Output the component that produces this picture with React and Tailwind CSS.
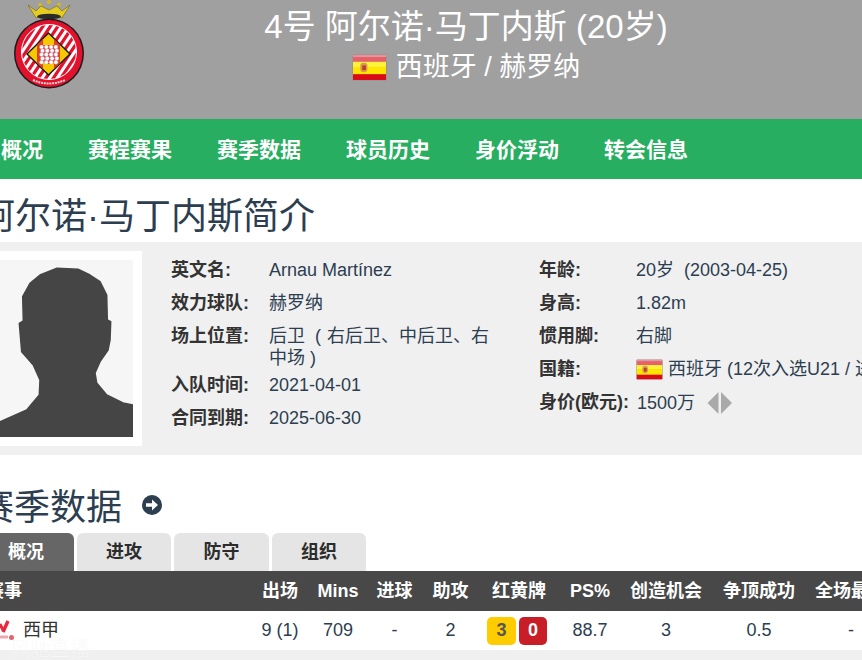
import React from "react";

const font = { fontFamily: '"Liberation Sans", "Noto Sans CJK SC", sans-serif' };

function Flag({ className }) {
  return (
    <svg viewBox="0 0 34 26" className={className + " blur-[0.3px]"} preserveAspectRatio="none">
      <rect x="0.5" y="0.5" width="33" height="25" rx="1.5" fill="#8f8f8f" />
      <rect x="1" y="1" width="32" height="2" fill="#f09098" />
      <rect x="1" y="3" width="32" height="4.5" fill="#e8606c" />
      <rect x="1" y="7.5" width="32" height="5" fill="#fff23a" />
      <rect x="1" y="12.5" width="32" height="7" fill="#ffe600" />
      <rect x="1" y="19.5" width="32" height="5.5" fill="#dd0a14" />
      <rect x="8" y="8.5" width="7" height="9" rx="3" fill="#d89a50" />
      <rect x="10" y="11" width="3.5" height="4.5" fill="#b8402a" />
    </svg>
  );
}

function Crest() {
  const stripes = [];
  for (let i = -8; i < 14; i++) {
    stripes.push(<line key={i} x1={i * 7.5 - 10} y1="100" x2={i * 7.5 + 50} y2="10" stroke="#fff" strokeWidth="3" />);
  }
  const dots = [];
  for (let r = 0; r < 5; r++) {
    for (let c = 0; c < 4; c++) {
      dots.push(<circle key={r + "-" + c} cx={41.5 + c * 4.8 + (r % 2 ? 1 : 0)} cy={47 + r * 3.8} r="2" fill="#fff" stroke="#d4a0a0" strokeWidth="0.4" />);
    }
  }
  return (
    <svg viewBox="0 0 100 100" className="w-[100px] h-[100px] shrink-0 blur-[0.35px]">
      <path d="M28 5 L36 11 L41 6 L49 10 L57 6 L62 11 L70 5 L62 18 Q49 12 36 18 Z" fill="#e6cc20" stroke="#6a6020" strokeWidth="0.6" />
      <circle cx="40" cy="4.5" r="1.8" fill="#d8b818" />
      <circle cx="49" cy="2" r="2" fill="#d8b818" />
      <circle cx="59" cy="4.5" r="1.8" fill="#d8b818" />
      <ellipse cx="49" cy="16.5" rx="12" ry="2.8" fill="#2a2a2a" />
      <circle cx="49" cy="53.5" r="35" fill="#1c1c1c" />
      <circle cx="49" cy="53.5" r="33.5" fill="#e2122d" />
      <clipPath id="inner"><circle cx="49" cy="52" r="27.5" /></clipPath>
      <circle cx="49" cy="52" r="27.5" fill="#e2122d" stroke="#fff" strokeWidth="1" />
      <g clipPath="url(#inner)">{stripes}</g>
      <path d="M48.5 32 L71 54 L48.5 76 L26 54 Z" fill="#1a1a1a" />
      <path d="M48.5 34 L69 54 L48.5 74 L28 54 Z" fill="#f5c800" />
      <path d="M37 45 L43 39 L43 69 L37 63 Z" fill="#e04020" />
      <path d="M54 39 L60 45 L60 63 L54 69 Z" fill="#e04020" />
      <path d="M39.5 45 H58.5 V60 Q49 68 39.5 60 Z" fill="#d8405a" />
      {dots}
      <path d="M33 80 Q49 87 65 80" stroke="#f5d5d5" strokeWidth="2" fill="none" strokeDasharray="2 0.8" />
    </svg>
  );
}

function Silhouette() {
  return (
    <svg viewBox="0 0 133 177" className="w-[133px] h-[177px] block bg-[#f6f6f6]">
      <path
        d="M57 8.3 L78 9.3 L90 15 L100 21.7 L106.7 35 L107.3 60 L110.7 61.7 L110 80 L108 90 L100 101.7 L95 113 L96.7 123 L106.7 135 L123 143 L133 145 L133 177 L0 177 L0 161.7 L26.7 150 L39.3 135 L40 120 L33.3 105 L21.7 91.7 L19.3 63.3 L23.3 61 L22.7 36.7 L30 23.3 L40 15 Z"
        fill="#454545"
        stroke="#454545"
        strokeWidth="1.5"
        strokeLinejoin="round"
      />
    </svg>
  );
}

function Row({ label, labelW, children, wrap }) {
  return (
    <div className="flex min-h-[33px] pt-[5px] leading-[22px]">
      <div className="font-bold text-[#333] shrink-0" style={{ width: labelW }}>{label}</div>
      <div className={wrap ? "w-[225px] text-[#2c3e50]" : "whitespace-nowrap text-[#2c3e50]"}>{children}</div>
    </div>
  );
}

function Cell({ children, className = "" }) {
  return <div className={"flex items-center justify-center whitespace-nowrap " + className}>{children}</div>;
}

const headers = ["出场", "Mins", "进球", "助攻", "红黄牌", "PS%", "创造机会", "争顶成功", "全场最佳"];

export default function App() {
  return (
    <div className="w-[862px] h-[660px] overflow-hidden bg-white relative" style={font}>
      <header className="h-[119px] bg-[#a0a0a0] flex">
        <Crest />
        <div className="w-[732px] text-center text-white">
          <div className="text-[33px] leading-[38px] mt-[8px]">4号 阿尔诺·马丁内斯 (20岁)</div>
          <div className="flex items-center justify-center gap-[9px] text-[27px] leading-[32px] mt-[5px]">
            <Flag className="w-[35px] h-[27px]" />
            <span>西班牙 / 赫罗纳</span>
          </div>
        </div>
      </header>

      <nav className="h-[60px] bg-[#27ae60] flex items-center gap-[45px] pl-[1px] pt-[2px] text-[21px] font-bold text-white">
        {["概况", "赛程赛果", "赛季数据", "球员历史", "身价浮动", "转会信息"].map((t) => (
          <span key={t}>{t}</span>
        ))}
      </nav>

      <h1 className="ml-[-21px] h-[63px] flex items-center text-[36px] font-normal text-[#2c3e50] whitespace-nowrap pt-[12px]">
        阿尔诺·马丁内斯简介
      </h1>

      <section className="h-[213px] bg-[#f0f0f0] flex text-[18px]">
        <div className="w-[142px] h-[195px] mt-[9px] bg-white pt-[9px] shrink-0">
          <Silhouette />
        </div>
        <div className="w-[368px] ml-[29px] pt-[12px] shrink-0">
          <Row label="英文名:" labelW="98px">Arnau Martínez</Row>
          <Row label="效力球队:" labelW="98px">赫罗纳</Row>
          <Row label="场上位置:" labelW="98px" wrap>
            后卫<span className="inline-block w-[22px] pl-[10px]">(</span>右后卫、中后卫、右中场<span className="ml-[5px]">)</span>
          </Row>
          <Row label="入队时间:" labelW="98px">2021-04-01</Row>
          <Row label="合同到期:" labelW="98px">2025-06-30</Row>
        </div>
        <div className="pt-[12px]">
          <Row label="年龄:" labelW="97px">20岁&nbsp;&nbsp;(2003-04-25)</Row>
          <Row label="身高:" labelW="97px">1.82m</Row>
          <Row label="惯用脚:" labelW="97px">右脚</Row>
          <Row label="国籍:" labelW="97px">
            <span className="inline-flex items-center gap-[5px]">
              <Flag className="w-[27px] h-[21px]" />
              <span>西班牙 (12次入选U21 / 进球0)</span>
            </span>
          </Row>
          <Row label="身价(欧元):" labelW="98px">
            <span className="inline-flex items-center">
              <span>1500万</span>
              <svg viewBox="0 0 26 24" className="w-[26px] h-[24px] ml-[12px]">
                <path d="M11.5 1 L0.5 12 L11.5 23 Z" fill="#a9a9a9" />
                <path d="M14 1 L25 12 L14 23 Z" fill="#a9a9a9" />
              </svg>
            </span>
          </Row>
        </div>
      </section>

      <div className="ml-[-22px] h-[78px] flex items-center gap-[20px] text-[36px] text-[#2c3e50] whitespace-nowrap pt-[28px]">
        <span>赛季数据</span>
        <svg viewBox="0 0 20 20" className="w-[20px] h-[20px] mb-[6px]">
          <circle cx="10" cy="10" r="10" fill="#2c3e50" />
          <path d="M4 8.2 H10 V4.6 L16 10 L10 15.4 V11.8 H4 Z" fill="#fff" />
        </svg>
      </div>

      <div className="ml-[-22px] flex gap-[3px] h-[38px] text-[18px] font-bold">
        <div className="w-[96px] rounded-t-[6px] bg-[#666] text-white flex items-center justify-center">概况</div>
        <div className="w-[94px] rounded-t-[6px] bg-[#e5e5e5] text-[#2c2c2c] flex items-center justify-center">进攻</div>
        <div className="w-[95px] rounded-t-[6px] bg-[#e5e5e5] text-[#2c2c2c] flex items-center justify-center">防守</div>
        <div className="w-[94px] rounded-t-[6px] bg-[#e5e5e5] text-[#2c2c2c] flex items-center justify-center">组织</div>
      </div>

      <div className="grid grid-cols-[250px_60px_56px_57px_55px_82px_60px_92px_94px_90px] h-[40px] bg-[#484848] text-white font-bold text-[18px] w-[896px]">
        <div className="flex items-center whitespace-nowrap">
          <span className="ml-[-14px]">赛事</span>
        </div>
        {headers.map((h) => (
          <Cell key={h}>{h}</Cell>
        ))}
      </div>

      <div className="grid grid-cols-[250px_60px_56px_57px_55px_82px_60px_92px_94px_90px] h-[39px] bg-white text-[#2c3e50] text-[18px] w-[896px]">
        <div className="flex items-center gap-[9px]">
          <svg viewBox="0 0 14 22" className="w-[14px] h-[22px] shrink-0 blur-[0.4px]">
            <path d="M8 1 L3 12" stroke="#e8283c" strokeWidth="3.5" />
            <path d="M0 4 L3 10" stroke="#e8283c" strokeWidth="3" />
            <path d="M0 17 H8" stroke="#f0a8b0" strokeWidth="3" />
            <circle cx="11.5" cy="17.5" r="2.5" fill="#e8606c" />
          </svg>
          <span className="text-[#333]">西甲</span>
        </div>
        <Cell>9 (1)</Cell>
        <Cell>709</Cell>
        <Cell>-</Cell>
        <Cell>2</Cell>
        <Cell className="gap-[3px] pr-[4px]">
          <span className="w-[29px] h-[28px] rounded-[5px] bg-[#ffcc00] text-[#555] font-bold flex items-center justify-center">3</span>
          <span className="w-[28px] h-[28px] rounded-[5px] bg-[#c81e28] text-white font-bold flex items-center justify-center">0</span>
        </Cell>
        <Cell>88.7</Cell>
        <Cell>3</Cell>
        <Cell>0.5</Cell>
        <Cell>-</Cell>
      </div>
      <div className="h-[10px] bg-[#f0f0f0]" />

      <div className="absolute left-[10px] top-[637px] text-[20px] leading-[24px] font-light text-white/70 whitespace-nowrap [text-shadow:0_0_1px_rgba(0,0,0,0.05)]">风驰直播</div>
    </div>
  );
}
